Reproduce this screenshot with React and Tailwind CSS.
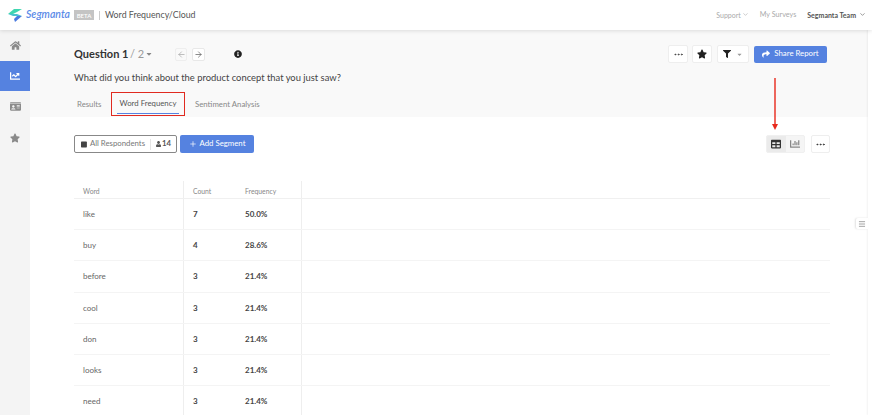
import { ArrowLeft, ArrowRight, ChevronDown, Plus, Ellipsis, Menu } from 'lucide-react';
import { FaHome, FaStar, FaFilter, FaShare, FaUser, FaInfoCircle, FaIdCard, FaChartLine, FaChartBar, FaTable, FaStop, FaCaretDown } from 'react-icons/fa';

const rows = [
  ['like', '7', '50.0%'],
  ['buy', '4', '28.6%'],
  ['before', '3', '21.4%'],
  ['cool', '3', '21.4%'],
  ['don', '3', '21.4%'],
  ['looks', '3', '21.4%'],
  ['need', '3', '21.4%'],
];

function Logo() {
  return (
    <svg width="15" height="14" viewBox="0 0 15 14" className="shrink-0">
      <path d="M0 6 L6 1 L14 1 L9 4 L5 6 Z" fill="#3fd6b0" />
      <path d="M0 6 L9 6 L14 8 L5 8 Z" fill="#49c0d0" />
      <path d="M14 8 L7 14 L6 11 L9 8 Z" fill="#4a7be0" />
    </svg>
  );
}

export default function App() {
  return (
    <div className="h-[415px] w-[872px] overflow-hidden whitespace-nowrap bg-white font-['Lato',sans-serif] text-[#555]">
      <header className="relative z-10 flex h-[30px] items-center bg-white pl-2 pr-[6px] shadow-[0_1px_4px_rgba(0,0,0,0.12)]">
        <Logo />
        <span className="ml-[3px] w-[45px] text-[10.5px] font-semibold italic text-[#5b8be8]">Segmanta</span>
        <span className="ml-[3px] flex h-[10px] w-[20px] items-center justify-center bg-[#c4c4c4] text-[6px] font-semibold text-white">BETA</span>
        <span className="ml-[5px] h-[9px] w-px bg-[#ccc]"></span>
        <span className="ml-[5px] text-[8.8px] text-[#555]">Word Frequency/Cloud</span>
        <nav className="ml-auto flex items-center text-[7px] text-[#aaa]">
          <span className="flex items-center gap-[1px]">Support <ChevronDown size={7} /></span>
          <span className="ml-[11px] text-[7.2px]">My Surveys</span>
          <span className="ml-[11px] flex items-center gap-[3px] font-bold text-[#555]">Segmanta Team <ChevronDown size={7} /></span>
        </nav>
      </header>

      <div className="flex h-[385px]">
        <aside className="flex w-[30px] shrink-0 flex-col bg-[#f4f4f4] text-[#8a8a8a]">
          <div className="flex h-[31px] items-center justify-center"><FaHome size={11} /></div>
          <div className="flex h-[30px] items-center justify-center bg-[#5582e0] text-white"><FaChartLine size={10} /></div>
          <div className="flex h-[31px] items-center justify-center"><FaIdCard size={11} /></div>
          <div className="flex h-[31px] items-center justify-center"><FaStar size={10} /></div>
        </aside>

        <main className="flex w-[838px] shrink-0 flex-col overflow-hidden">
          <section className="h-[87px] shrink-0 bg-[#f9f9f9] pl-[44px] pr-[41px] pt-[15px]">
            <div className="flex h-[18px] items-center">
              <span className="w-[53px] text-[11px] font-bold text-[#333]">Question 1</span>
              <span className="ml-[3px] w-[13px] text-[11px] text-[#999]">/ 2</span>
              <FaCaretDown size={8} className="ml-[2px] text-[#888]" />
              <span className="ml-[22px] flex h-[13px] w-[12px] items-center justify-center rounded-[2px] border border-[#eee] bg-[#f9f9f9] text-[#aaa]"><ArrowLeft size={9} /></span>
              <span className="ml-[5px] flex h-[13px] w-[13px] items-center justify-center rounded-[2px] border border-[#e8e8e8] bg-white text-[#666]"><ArrowRight size={9} /></span>
              <FaInfoCircle size={8} className="ml-[29px] text-[#222]" />
              <div className="ml-auto flex items-center">
                <button className="flex h-[18px] w-[20px] items-center justify-center rounded-[2px] border border-[#eee] bg-white text-[#444]"><Ellipsis size={11} /></button>
                <button className="ml-[4px] flex h-[18px] w-[20px] items-center justify-center rounded-[2px] border border-[#eee] bg-white text-[#222]"><FaStar size={10} /></button>
                <button className="ml-[5px] flex h-[18px] w-[32px] items-center justify-center gap-[5px] rounded-[2px] border border-[#eee] bg-white text-[#222]"><FaFilter size={8} /><FaCaretDown size={7} className="text-[#999]" /></button>
                <button className="ml-[5px] flex h-[17px] w-[73px] items-center justify-center gap-[4px] rounded-[2px] bg-[#5582e0] text-[7.8px] text-white"><FaShare size={8} />Share Report</button>
              </div>
            </div>
            <p className="mt-[9px] text-[9.4px] leading-[12px] text-[#444]">What did you think about the product concept that you just saw?</p>
            <div className="ml-[3px] mt-[8px] flex h-[24px] items-center text-[7.8px] text-[#888]">
              <span className="w-[24px] pt-px">Results</span>
              <span className="ml-[10px] flex h-[24px] w-[74px] items-stretch justify-center border border-[#e02a20] pt-[2px] pb-px text-[#555]">
                <span className="flex w-[62px] items-center justify-center border-b border-[#5582e0]">Word Frequency</span>
              </span>
              <span className="ml-[10px] pt-px">Sentiment Analysis</span>
            </div>
          </section>

          <div className="relative mt-[18px] flex h-[18px] shrink-0 items-center pl-[44px] pr-[38px] text-[7.8px]">
            <div className="flex h-[18px] w-[103px] items-center rounded-[2px] border border-[#888] bg-white pl-[6px] pr-[5px] text-[#777]">
              <FaStop size={7} className="text-[#444]" />
              <span className="ml-[3px] w-[56px]">All Respondents</span>
              <span className="ml-[5px] h-[11px] w-px bg-[#e5e5e5]"></span>
              <FaUser size={6} className="ml-[5px] text-[#555]" />
              <span className="ml-px font-bold text-[#555]">14</span>
            </div>
            <button className="ml-[3px] flex h-[18px] w-[74px] items-center justify-center gap-[3px] rounded-[2px] bg-[#5582e0] text-white"><Plus size={8} />Add Segment</button>
            <div className="ml-auto flex h-[18px] w-[39px] overflow-hidden rounded-[2px] border border-[#f0f0f0] bg-[#f5f5f5]">
              <span className="flex w-[20px] items-center justify-center bg-[#ebebeb] text-[#333]"><FaTable size={10} /></span>
              <span className="flex w-[19px] items-center justify-center text-[#888]"><FaChartBar size={10} /></span>
            </div>
            <button className="ml-[6px] flex h-[18px] w-[19px] items-center justify-center rounded-[2px] border border-[#eee] bg-white text-[#333]"><Ellipsis size={11} /></button>
            {/* red annotation arrow */}
            <svg width="6" height="52" viewBox="0 0 6 52" className="absolute left-[742px] top-[-57px]">
              <path d="M3 0 V47" stroke="#e8291c" strokeWidth="1.4" />
              <path d="M0 46 H6 L3 52 Z" fill="#e8291c" />
            </svg>
          </div>

          <div className="ml-[44px] mr-[38px] mt-[28px] shrink-0 text-[8px]">
            <div className="grid h-[18px] grid-cols-[109px_118px_1fr] border-b border-[#f0f0f0] text-[6.8px] text-[#888]">
              <div className="flex items-center pl-[9px] pt-[3px]">Word</div>
              <div className="flex items-center border-l border-[#eee] pl-[9px] pt-[3px]">
                <span className="w-[52px]">Count</span>
                <span>Frequency</span>
              </div>
              <div className="border-l border-[#eee]"></div>
            </div>
            {rows.map((row) => (
              <div key={row[0]} className="grid h-[31.2px] grid-cols-[109px_118px_1fr] border-b border-[#f4f4f4]">
                <div className="flex items-center pl-[9px] text-[#666]">{row[0]}</div>
                <div className="flex items-center border-l border-[#eee] pl-[9px] font-bold text-[#444]">
                  <span className="w-[52px]">{row[1]}</span>
                  <span>{row[2]}</span>
                </div>
                <div className="border-l border-[#eee]"></div>
              </div>
            ))}
          </div>
        </main>

        <div className="relative w-[4px] shrink-0 bg-white shadow-[-1px_0_2px_rgba(0,0,0,0.05)]">
          <span className="absolute right-[4px] top-[188px] flex h-[11px] w-[12px] items-center justify-center rounded-l-[2px] bg-white text-[#777] shadow-[-1px_0_2px_rgba(0,0,0,0.12)]"><Menu size={8} /></span>
        </div>
      </div>
    </div>
  );
}
